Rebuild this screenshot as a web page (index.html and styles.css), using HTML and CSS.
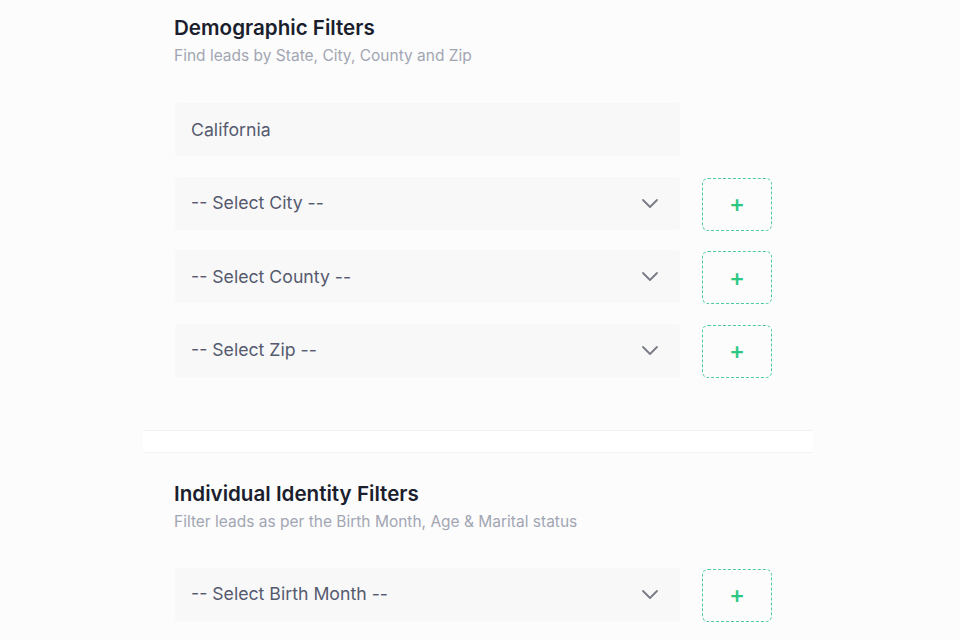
FILE: index.html
```html
<!DOCTYPE html>
<html lang="en">

<head>
  <meta charset="UTF-8">
  <meta name="viewport" content="width=device-width, initial-scale=1.0">
  <title>Lead Filters</title>
  <link rel="stylesheet" href="styles.css">
</head>

<body>

  <div class="panel">
    <div class="section first">
      <h2>Demographic Filters</h2>
      <p class="sub">Find leads by State, City, County and Zip</p>

      <div class="fields">
        <div class="row">
          <div class="field">California</div>
        </div>
        <div class="row">
          <div class="field select">
            <span>-- Select City --</span>
            <svg class="chev" viewBox="0 0 18 18"><polyline points="2,6 9,13 16,6" /></svg>
          </div>
          <button class="add">+</button>
        </div>
        <div class="row">
          <div class="field select">
            <span>-- Select County --</span>
            <svg class="chev" viewBox="0 0 18 18"><polyline points="2,6 9,13 16,6" /></svg>
          </div>
          <button class="add">+</button>
        </div>
        <div class="row">
          <div class="field select">
            <span>-- Select Zip --</span>
            <svg class="chev" viewBox="0 0 18 18"><polyline points="2,6 9,13 16,6" /></svg>
          </div>
          <button class="add">+</button>
        </div>
      </div>
    </div>

    <div class="divider"></div>

    <div class="section">
      <h2>Individual Identity Filters</h2>
      <p class="sub">Filter leads as per the Birth Month, Age &amp; Marital status</p>

      <div class="fields">
        <div class="row">
          <div class="field select">
            <span>-- Select Birth Month --</span>
            <svg class="chev" viewBox="0 0 18 18"><polyline points="2,6 9,13 16,6" /></svg>
          </div>
          <button class="add">+</button>
        </div>
      </div>
    </div>
  </div>

</body>

</html>
```

FILE: styles.css
```css
body {
  margin: 0;
  background-color: #fcfcfd;
  font-family: Inter, "Noto Sans", sans-serif;
  color: #1b1e2d;
}

.panel {
  width: 670px;
  margin-left: 143px;
}

.section {
  padding: 29px 31px 54px;
}

.section.first {
  padding-top: 16px;
}

h2 {
  margin: 0;
  font-size: 20.6px;
  line-height: 24px;
  font-weight: 600;
  color: #1b1e2d;
}

.sub {
  margin: 6px 0 0;
  font-size: 15.5px;
  line-height: 20px;
  color: #a2a6b2;
}

.fields {
  margin: 36px 0 0 1px;
  display: flex;
  flex-direction: column;
  gap: 21.5px;
}

.section.first .fields {
  margin-top: 37px;
}

.row {
  display: flex;
  align-items: flex-start;
  gap: 22px;
  height: 52px;
}

.field {
  width: 505px;
  height: 52px;
  box-sizing: border-box;
  padding: 0 21px 0 16px;
  display: flex;
  align-items: center;
  justify-content: space-between;
  background-color: #f8f8f9;
  border-radius: 4px;
  box-shadow: 0 1px 2px rgba(0, 0, 0, 0.025);
  font-size: 17.7px;
  color: #555a6e;
}

.chev {
  width: 18px;
  height: 18px;
  fill: none;
  stroke: #787b85;
  stroke-width: 1.8;
  stroke-linecap: round;
  stroke-linejoin: round;
}

.add {
  width: 70px;
  height: 53px;
  margin-top: 1px;
  box-sizing: border-box;
  border: 1px dashed #4ecb9c;
  border-radius: 6px;
  background: transparent;
  color: #2cc882;
  font-family: Inter, sans-serif;
  font-size: 24px;
  font-weight: 500;
  line-height: 1;
  padding: 0;
}

.divider {
  height: 21px;
  background-color: #fff;
  border-top: 1px solid #f0f1f3;
  border-bottom: 1px solid #f1f2f4;
}
```
